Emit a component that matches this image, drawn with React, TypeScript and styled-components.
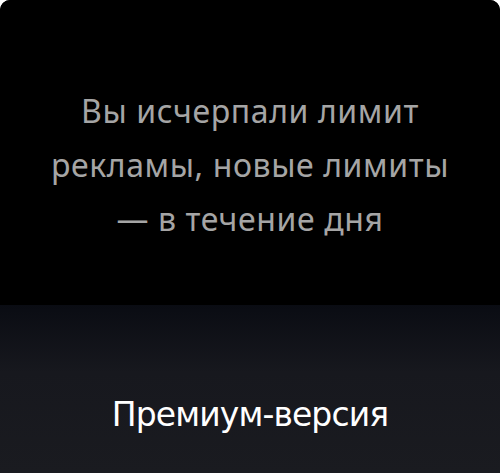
import React from "react";
import styled, { createGlobalStyle } from "styled-components";

const Global = createGlobalStyle`
  html, body { margin: 0; padding: 0; background: #ffffff; }
  #root { width: 500px; height: 473px; }
`;

const Card = styled.div`
  width: 500px;
  height: 473px;
  display: flex;
  flex-direction: column;
  border-radius: 10px 10px 0 0;
  overflow: hidden;
  background: #000;
`;

const Message = styled.div`
  height: 305px;
  display: flex;
  align-items: center;
  justify-content: center;
  padding: 24px 30px 0;
  box-sizing: border-box;
  background: #000;
`;

const MessageText = styled.p`
  margin: 0;
  text-align: center;
  color: #a5a5a5;
  font-family: "Noto Sans", sans-serif;
  font-size: 32px;
  letter-spacing: 0.6px;
  line-height: 54px;
`;

const Footer = styled.div`
  flex: 1;
  display: flex;
  align-items: center;
  justify-content: center;
  padding-top: 51px;
  background: linear-gradient(to bottom, #0a0c13 0%, #17181e 40%, #1a1b20 100%);
`;

const Premium = styled.span`
  color: #ffffff;
  font-family: "DejaVu Sans", sans-serif;
  font-size: 33px;
  letter-spacing: -0.9px;
`;

export default function App() {
  return (
    <>
      <Global />
      <Card>
        <Message>
          <MessageText>
            Вы исчерпали лимит
            <br />
            рекламы, новые лимиты
            <br />— в течение дня
          </MessageText>
        </Message>
        <Footer>
          <Premium>Премиум-версия</Premium>
        </Footer>
      </Card>
    </>
  );
}
